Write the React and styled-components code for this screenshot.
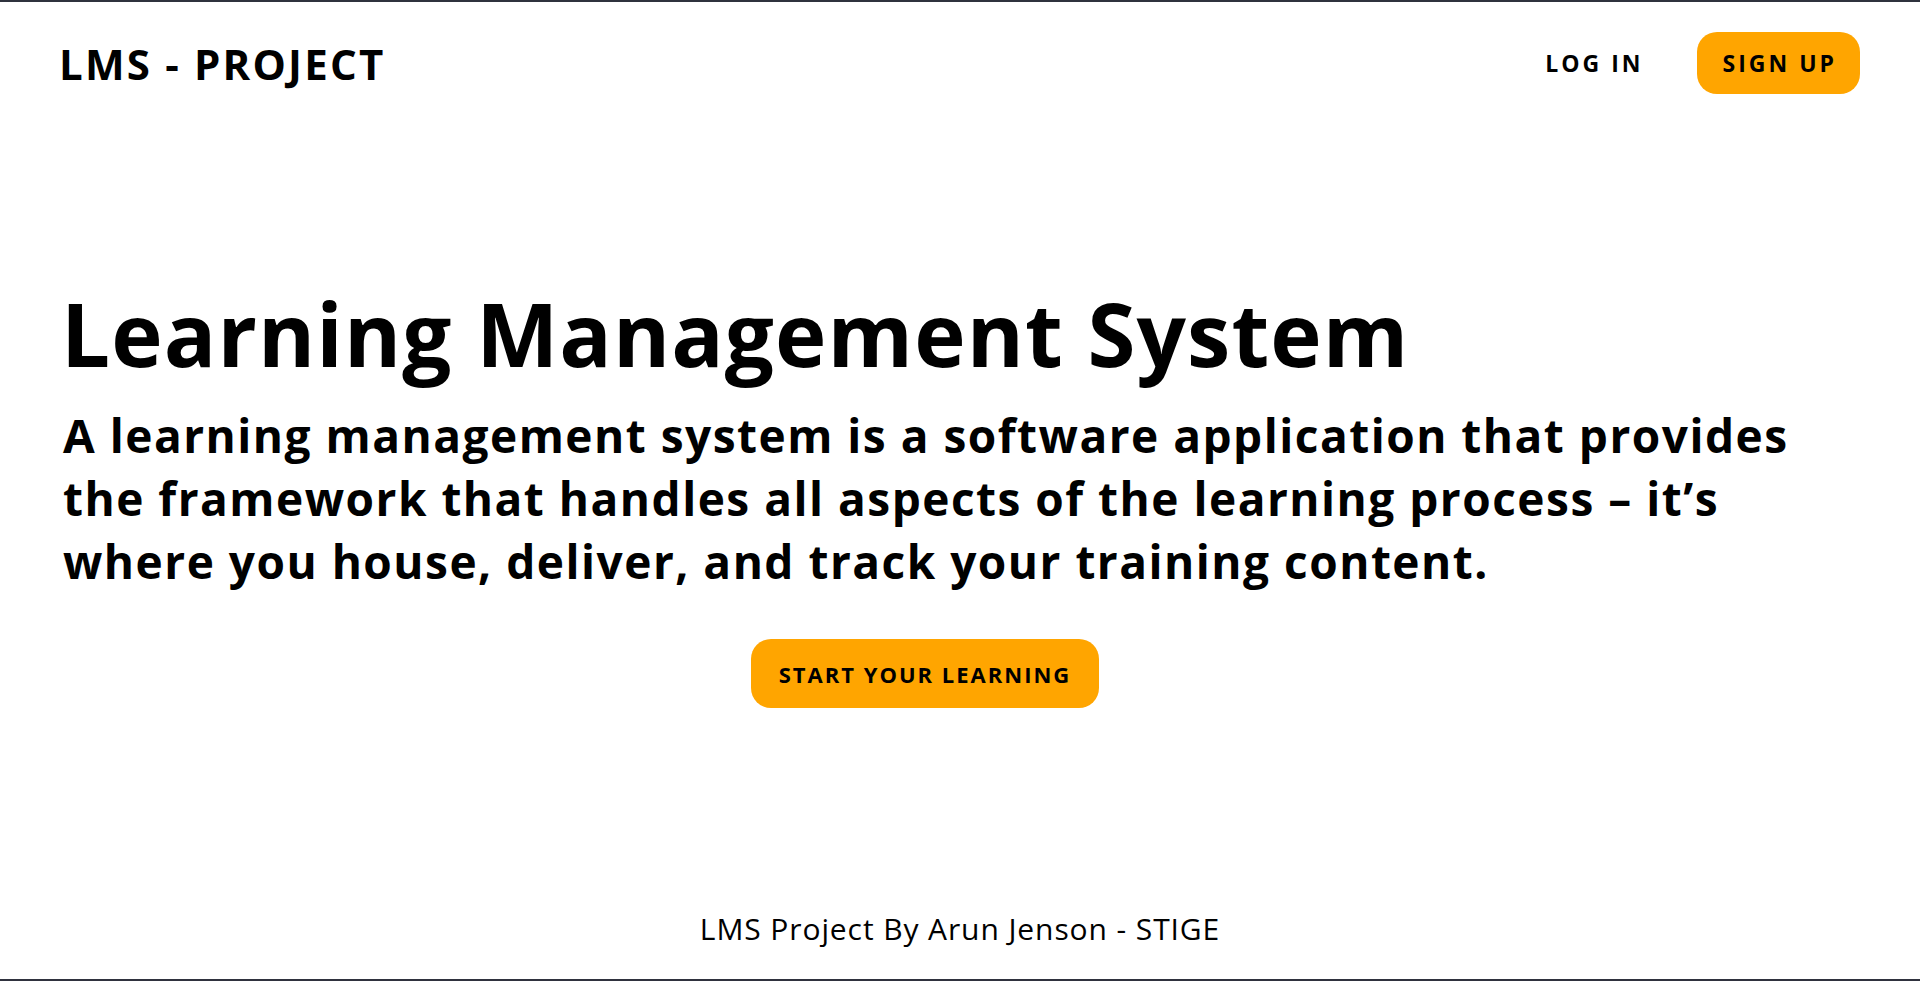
import React from 'react'
import styled, { createGlobalStyle } from 'styled-components'

const GlobalStyle = createGlobalStyle`
  html, body {
    margin: 0;
    padding: 0;
    background: #ffffff;
  }
  body {
    font-family: "Open Sans", "Liberation Sans", sans-serif;
    color: #000;
  }
`

const Page = styled.div`
  min-height: 100vh;
  box-sizing: border-box;
  border-top: 2px solid #2f323e;
  border-bottom: 2px solid #2f323e;
  display: flex;
  flex-direction: column;
`

const Header = styled.header`
  display: flex;
  align-items: center;
  justify-content: space-between;
  padding: 29px 60px 0 59px;
  height: 64px;
`

const Logo = styled.h1`
  margin: 0;
  font-size: 42px;
  font-weight: 700;
  letter-spacing: 2.2px;
`

const Nav = styled.nav`
  display: flex;
  align-items: center;
  gap: 53px;
`

const NavLink = styled.a`
  font-size: 23px;
  font-weight: 700;
  letter-spacing: 3px;
  color: #000;
  text-decoration: none;
  cursor: pointer;
`

const Button = styled.button`
  font-family: inherit;
  font-weight: 700;
  color: #000;
  background: #ffa500;
  border: none;
  border-radius: 20px;
  cursor: pointer;
  font-size: ${p => p.big ? '22px' : '23px'};
  letter-spacing: ${p => p.big ? '2px' : '3px'};
  height: ${p => p.big ? '69px' : '62px'};
  padding: ${p => p.big ? '0 28px' : '0 23px 0 26px'};
`

const Hero = styled.main`
  flex: 1;
  padding: 0 63px;
  margin-top: 186px;
`

const Title = styled.h2`
  margin: 0 0 0 -2px;
  font-size: 87px;
  font-weight: 700;
  line-height: 1.2;
  letter-spacing: 1.1px;
`

const Lead = styled.p`
  margin: 19px 0 0;
  font-size: 46px;
  font-weight: 700;
  line-height: 63px;
  letter-spacing: 1.5px;
  max-width: 1760px;
`

const Actions = styled.div`
  display: flex;
  justify-content: center;
  margin-top: 46px;
  padding-right: 70px;
`

const Footer = styled.footer`
  text-align: center;
  font-size: 30px;
  letter-spacing: 0.9px;
  padding-bottom: 30px;
`

export default function App() {
  return (
    <Page>
      <GlobalStyle />
      <Header>
        <Logo>LMS - PROJECT</Logo>
        <Nav>
          <NavLink>LOG IN</NavLink>
          <Button>SIGN UP</Button>
        </Nav>
      </Header>
      <Hero>
        <Title>Learning Management System</Title>
        <Lead>
          A learning management system is a software application that provides
          the framework that handles all aspects of the learning process – it’s
          where you house, deliver, and track your training content.
        </Lead>
        <Actions>
          <Button big>START YOUR LEARNING</Button>
        </Actions>
      </Hero>
      <Footer>LMS Project By Arun Jenson - STIGE</Footer>
    </Page>
  )
}
